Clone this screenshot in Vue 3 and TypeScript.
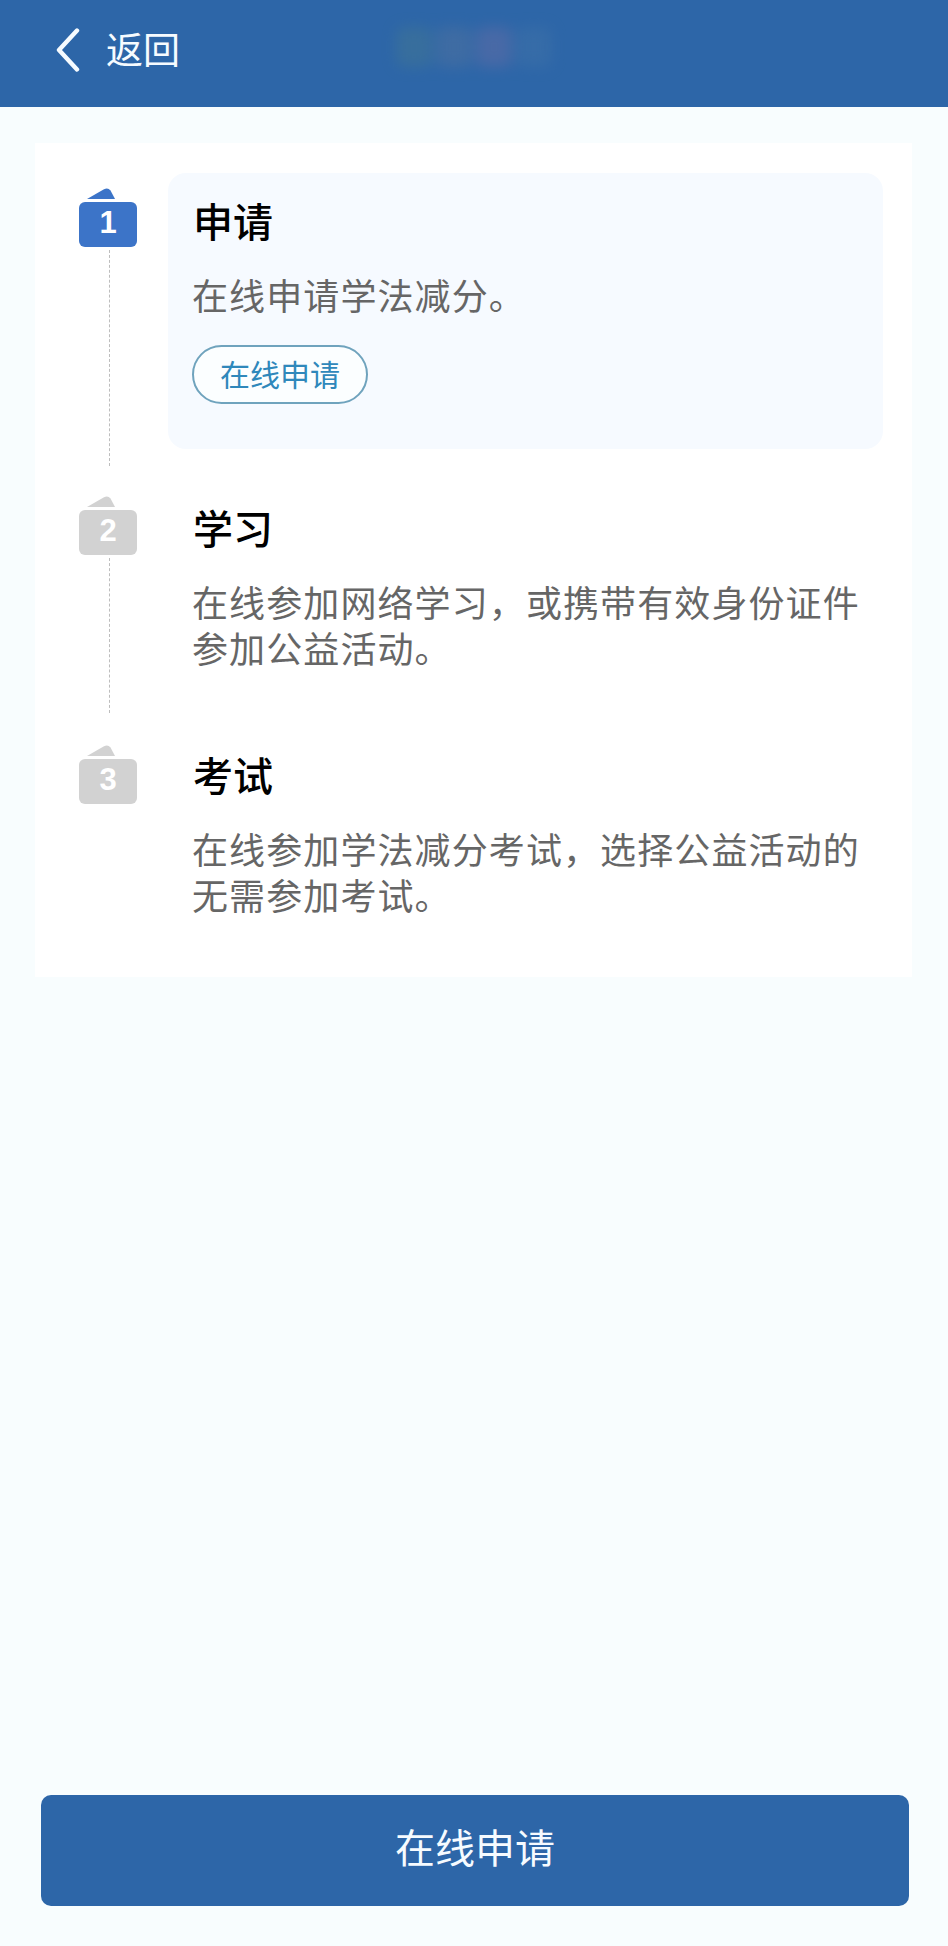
<script setup lang="ts">
interface Step {
  n: number
  title: string
  desc: string
}
const steps: Step[] = [
  { n: 1, title: '申请', desc: '在线申请学法减分。' },
  { n: 2, title: '学习', desc: '在线参加网络学习，或携带有效身份证件参加公益活动。' },
  { n: 3, title: '考试', desc: '在线参加学法减分考试，选择公益活动的无需参加考试。' },
]
const blobs = ['#3f7496', '#4a70a0', '#5a6ca6', '#3c70a8']
</script>

<template>
  <div class="page">
    <header class="bar">
      <div class="back">
        <svg class="chev" viewBox="0 0 24 44" width="24" height="44">
          <path d="M21 2.5 L3 22 L21 41.5" fill="none" stroke="#f6fbff" stroke-width="4.4" stroke-linecap="round" stroke-linejoin="round" />
        </svg>
        <span>返回</span>
      </div>
      <div class="blurred" aria-hidden="true">
        <i v-for="c in blobs" :key="c" :style="{ background: c }"></i>
      </div>
    </header>

    <section class="card">
      <div v-for="(s, i) in steps" :key="s.n" class="step" :class="{ active: i === 0 }">
        <div class="marker">
          <svg class="tab" viewBox="0 0 28 11" width="28" height="11">
            <path d="M0 11 L17 1.2 Q21 -0.8 23.5 2.5 L28 11 Z" />
          </svg>
          <div class="badge">{{ s.n }}</div>
          <div v-if="i < steps.length - 1" class="line"></div>
        </div>
        <div class="body">
          <h2 class="title">{{ s.title }}</h2>
          <p class="desc">{{ s.desc }}</p>
          <div v-if="i === 0" class="pill">在线申请</div>
        </div>
      </div>
    </section>

    <div class="cta">在线申请</div>
  </div>
</template>

<style>
html, body { margin: 0; padding: 0; background: #f8fdfe; }
</style>

<style scoped>
.page {
  width: 948px;
  height: 1946px;
  background: #f8fdfe;
  display: flex;
  flex-direction: column;
  font-family: "Noto Sans CJK SC", "Noto Sans", sans-serif;
  overflow: hidden;
}
.bar {
  height: 107px;
  background: #2d66a8;
  position: relative;
  flex: none;
  display: flex;
  align-items: center;
}
.back {
  display: flex;
  align-items: center;
  margin-left: 56px;
  gap: 26px;
  color: #f6fbff;
  font-size: 37px;
  line-height: 1;
  margin-top: -7px;
}
.back span { margin-top: -3px; }
.chev { display: block; }
.blurred {
  position: absolute;
  left: 396px;
  top: 27px;
  display: flex;
  gap: 4px;
  filter: blur(7px);
  opacity: 0.6;
}
.blurred i {
  display: block;
  width: 36px;
  height: 40px;
  border-radius: 8px;
}
.card {
  margin: 36px 36px 0 35px;
  background: #ffffff;
  padding: 30px 29px 34px 44px;
  display: flex;
  flex-direction: column;
  gap: 31px;
}
.step {
  display: flex;
  align-items: stretch;
}
.marker {
  width: 58px;
  flex: none;
  padding-top: 15px;
  margin-right: 31px;
  display: flex;
  flex-direction: column;
  align-items: center;
  fill: #d2d2d2;
}
.step:nth-child(2) .marker { padding-top: 16px; }
.step:nth-child(3) .marker { padding-top: 18px; }
.active .marker { fill: #3c74c8; }
.tab {
  display: block;
  align-self: flex-start;
  margin-left: 8px;
  margin-bottom: 3px;
}
.badge {
  width: 58px;
  height: 45px;
  border-radius: 6px;
  background: #d2d2d2;
  color: #ffffff;
  font-size: 31px;
  font-weight: 700;
  line-height: 42px;
  text-align: center;
  font-family: "Liberation Sans", sans-serif;
}
.active .badge { background: #3c74c8; }
.line {
  flex: 1;
  width: 0;
  margin: 3px 0 -17px 2px;
  border-left: 1px dashed #bdbdbd;
}
.body {
  flex: 1;
  padding: 22px 15px 26px 24px;
  border-radius: 18px;
}
.active .body {
  background: #f6faff;
  padding-bottom: 45px;
}
.title {
  margin: 0 0 0 1px;
  font-size: 40px;
  font-weight: 500;
  line-height: 50px;
  color: #000000;
}
.desc {
  margin: 26px 0 0;
  font-size: 36px;
  line-height: 46px;
  letter-spacing: 1.1px;
  color: #666666;
}
.pill {
  margin-top: 28px;
  width: 176px;
  height: 59px;
  box-sizing: border-box;
  border: 2px solid #6fa3bd;
  border-radius: 30px;
  background: #fbfeff;
  color: #2f88bb;
  font-size: 30px;
  line-height: 53px;
  text-align: center;
}
.cta {
  margin: auto 39px 40px 41px;
  height: 111px;
  border-radius: 10px;
  background: #2d66a8;
  color: #f6fbff;
  font-size: 40px;
  line-height: 103px;
  text-align: center;
  flex: none;
}
</style>
